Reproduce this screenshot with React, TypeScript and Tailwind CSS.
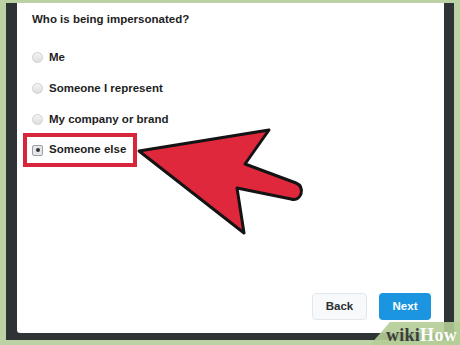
import React from 'react'

const options = ['Me', 'Someone I represent', 'My company or brand']

const font = { fontFamily: '"Liberation Sans", Arial, sans-serif' }

function Radio({ checked }: { checked?: boolean }) {
    if (checked) {
        return (
            <div className="w-[11px] h-[11px] rounded-[2px] border border-[#9aa0a6] bg-[#e4e6e9] flex items-center justify-center shrink-0">
                <div className="w-[4px] h-[4px] rounded-full bg-[#333]" />
            </div>
        )
    }
    return <div className="w-[11px] h-[11px] rounded-full border border-[#cfcfcf] bg-gradient-to-b from-[#f4f4f4] to-[#dedede] shrink-0" />
}

export default function App() {
    return (
        <div className="w-[460px] h-[345px] bg-[#bcd2a4] pt-[3px] pl-[6px] pr-[6px] pb-[5px] relative overflow-hidden" style={font}>
            <div className="w-full h-full bg-[#2e3436] border-l-[11px] border-r-[10px] border-b-[7px] border-[#2e3436]">
                <div className="w-full h-full bg-white rounded-bl-[3px] flex flex-col">
                    <div className="pl-[15px] pt-[8px] h-[39px] text-[11.5px] leading-[16px] font-bold text-[#1e1e1e]">
                        Who is being impersonated?
                    </div>
                    {options.map((o) => (
                        <div key={o} className="h-[31px] pl-[15px] flex items-center gap-[6px] text-[11.5px] font-bold text-[#1e1e1e]">
                            <Radio />
                            <span>{o}</span>
                        </div>
                    ))}
                    <div className="-mt-[2px] ml-[6px] w-[114px] h-[34px] border-[4px] border-[#d7263c] pl-[5px] flex items-center gap-[6px] text-[11.5px] font-bold text-[#1e1e1e]">
                        <Radio checked />
                        <span>Someone else</span>
                    </div>
                    <div className="mt-auto flex justify-end gap-[12px] pr-[13px] pb-[13px]">
                        <button className="w-[55px] h-[27px] rounded-[4px] border border-[#e1e8ed] bg-[#f7f9fa] text-[11.5px] font-bold text-[#292f33]">
                            Back
                        </button>
                        <button className="w-[52px] h-[27px] rounded-[4px] bg-[#1b95e0] text-[11.5px] font-bold text-white">
                            Next
                        </button>
                    </div>
                </div>
            </div>

            {/* annotation arrow */}
            <svg className="absolute left-0 top-0 pointer-events-none" width="460" height="345" viewBox="0 0 460 345">
                <path
                    d="M 139 151 L 269 130 L 245 164 L 296 183 Q 303 186 301 194 Q 298 201 291 199 L 237 188 L 244 233 Z"
                    fill="#e0283d"
                    stroke="#141414"
                    strokeWidth="3"
                    strokeLinejoin="round"
                />
            </svg>

            {/* watermark */}
            <div
                className="absolute right-0 bottom-0 w-[90px] h-[23px] bg-[#b4cd96]/90 flex items-end justify-end pr-[3px] pb-[1px]"
                style={{ clipPath: 'polygon(20px 0, 100% 0, 100% 100%, 0 100%)' }}
            >
                <span className="text-[18px] font-bold leading-none tracking-[0.3px]" style={{ fontFamily: '"Liberation Serif", "DejaVu Serif", serif' }}>
                    <span className="text-[#3d3d3d]">wiki</span>
                    <span className="text-white">How</span>
                </span>
            </div>
        </div>
    )
}
